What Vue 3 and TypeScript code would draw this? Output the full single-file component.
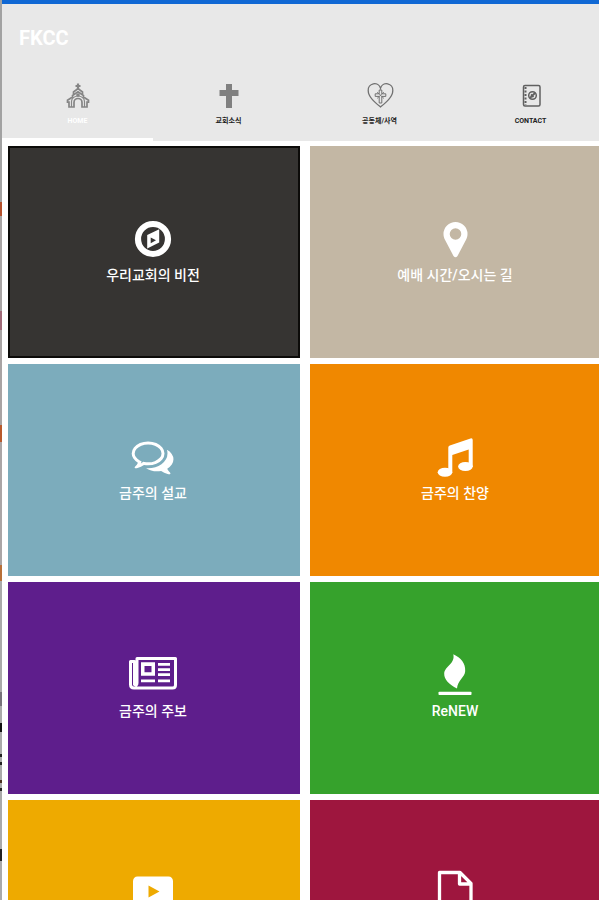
<script setup lang="ts">
import { ref } from 'vue'

type TabIcon = 'church' | 'cross' | 'heart' | 'contact'
type TileIcon = 'compass' | 'pin' | 'chat' | 'music' | 'news' | 'flame' | 'video' | 'file'

interface Tab {
  icon: TabIcon
  label: string
}

interface Tile {
  icon: TileIcon
  label: string
  tone: string
}

const tabs: Tab[] = [
  { icon: 'church', label: 'HOME' },
  { icon: 'cross', label: '교회소식' },
  { icon: 'heart', label: '공동체/사역' },
  { icon: 'contact', label: 'CONTACT' },
]

const tiles: Tile[] = [
  { icon: 'compass', label: '우리교회의 비전', tone: 'charcoal' },
  { icon: 'pin', label: '예배 시간/오시는 길', tone: 'sand' },
  { icon: 'chat', label: '금주의 설교', tone: 'teal' },
  { icon: 'music', label: '금주의 찬양', tone: 'orange' },
  { icon: 'news', label: '금주의 주보', tone: 'purple' },
  { icon: 'flame', label: 'ReNEW', tone: 'green' },
  { icon: 'video', label: '', tone: 'amber' },
  { icon: 'file', label: '', tone: 'crimson' },
]

const active = ref(0)
</script>

<template>
  <div class="viewport">
    <div class="edge" aria-hidden="true"></div>
    <div class="screen">
      <div class="status"></div>
      <header class="header">
        <h1 class="title">FKCC</h1>
        <nav class="tabs">
          <button
            v-for="(tab, i) in tabs"
            :key="tab.icon"
            type="button"
            class="tab"
            :class="{ active: i === active }"
            @click="active = i"
          >
            <svg class="tab-icon" viewBox="0 0 28 28" aria-hidden="true">
              <g v-if="tab.icon === 'church'" fill="none" stroke="#858585" stroke-width="1.7">
                <path d="M14 1.5v6M11.5 4h5" stroke-width="2.2" />
                <path d="M9.5 12V10L14 6.5l4.500 3.500V12" />
                <path d="M8.500 13.500L14 9.800l5.500 3.700v1.500l5 3.200v2h-1.500V25h-5v-4.500a4 4 0 0 0-8 0V25H5v-4.800H3.500v-2l5-3.200z" />
                <path d="M7.500 25v-5.500a6.500 5.500 0 0 1 13 0V25" stroke-width="1.200" />
                <circle cx="14" cy="13" r="1" />
              </g>
              <path v-else-if="tab.icon === 'cross'" fill="#808080" d="M11 2h6v6h6.500v6H17v12h-6V14H4.500V8H11z" />
              <g v-else-if="tab.icon === 'heart'" fill="none" stroke="#707070" stroke-width="1.300">
                <path d="M14.500 25C9 20.500 2.200 15 2.200 8.500a6.300 6.300 0 0 1 12.300-2.300A6.300 6.300 0 0 1 26.800 8.500C26.800 15 20 20.500 14.500 25z" />
                <path d="M13.200 8h2.600v3.800h4v2.600h-4V21h-2.600v-6.600h-4v-2.600h4z" stroke-width="1" />
                <path d="M11 10l7 6.500M18 10l-7 6.500" stroke-width=".8" />
              </g>
              <g v-else fill="none" stroke="#606060" stroke-width="1.500">
                <rect x="6.500" y="3.500" width="16.500" height="20.500" rx="1.500" />
                <path d="M8.500 5v18" stroke-dasharray="2 1.500" stroke-width="2" />
                <circle cx="15.500" cy="13.500" r="3.800" />
                <path d="M13 16l5-5M14 12.500l2.500 2.500" stroke-width="1.800" />
              </g>
            </svg>
            <span class="tab-label">{{ tab.label }}</span>
          </button>
        </nav>
      </header>

      <main class="grid">
        <a v-for="tile in tiles" :key="tile.icon" href="#" class="tile" :class="tile.tone">
          <svg class="tile-icon" viewBox="0 0 48 40" fill="#fff" aria-hidden="true">
            <template v-if="tile.icon === 'compass'">
              <circle cx="24" cy="20" r="15" fill="none" stroke="#fff" stroke-width="6.200" />
              <path fill-rule="evenodd" d="M18.200 16L30.200 10.300V23.500L18.200 29.500zM21.700 18.500V24.300L27 21.300z" />
            </template>
            <path
              v-else-if="tile.icon === 'pin'"
              fill-rule="evenodd"
              d="M24.500 3a12 12 0 0 1 12 12c0 2.500-.7 4.200-1.600 6L26.500 37q-2 2.500-4 0L14.100 21c-.9-1.800-1.600-3.500-1.600-6a12 12 0 0 1 12-12zm0 6.200a5.800 5.800 0 1 0 0 11.600 5.800 5.800 0 0 0 0-11.600z"
            />
            <path
              v-else-if="tile.icon === 'chat'"
              transform="translate(2.700 -1.500) scale(.0233)"
              d="M704 384q-153 0-286 52t-211.500 141-78.500 191q0 82 53 158t149 132l97 56-35 84q34-20 62-39l44-31 53 10q78 14 153 14 153 0 286-52t211.500-141 78.500-191-78.500-191-211.500-141-286-52zm0-128q191 0 353.500 68.500t256.500 186.500 94 257-94 257-256.500 186.500-353.500 68.500q-86 0-176-16-124 88-278 128-36 9-86 16h-3q-11 0-20.500-8t-11.500-21q-1-3-1-6.500t.5-6.500 2-6l2.500-5 3.500-5.500 4-5 4.500-5 4-4.500q5-6 23-25t26-29.500 22.500-29 25-38.500 20.500-44q-124-72-195-177t-71-224q0-139 94-257t256.500-186.500 353.500-68.500zm822 1169q10 24 20.500 44t25 38.500 22.500 29 26 29.500 23 25q1 1 4 4.500t4.500 5 4 5 3.500 5.500l2.500 5 2 6 .5 6.500-1 6.500q-3 14-13 22t-22 7q-50-7-86-16-154-40-278-128-90 16-176 16-271 0-472-132 58 4 88 4 161 0 309-45t264-129q125-92 192-212t67-254q0-77-23-152 129 71 204 178t75 230q0 120-71 224.500t-195 176.500z"
            />
            <template v-else-if="tile.icon === 'music'">
              <path d="M17.300 10.500q0-1.500 1.500-2L39.500 1.400q2.200-.6 2.200 1.600V30h-4V12.500L21.300 18v17.500h-4z" />
              <ellipse cx="14" cy="35.200" rx="7.300" ry="4.500" />
              <ellipse cx="34.400" cy="29.500" rx="7.300" ry="4.500" />
            </template>
            <template v-else-if="tile.icon === 'news'">
              <path
                fill="none"
                stroke="#fff"
                stroke-width="3"
                stroke-linejoin="round"
                d="M8 3.500H46.500V30q0 3-3 3H5Q1.500 33 1.500 29.500V6.500H5.500V29.500Q8 31 8 28z"
              />
              <path fill-rule="evenodd" d="M12 7.300h14v13.500H12zM15.500 11v6.300h7V11z" />
              <path d="M29 8h12v2.700H29zM29 13.200h12v2.700H29zM29 18.300h12V21H29zM12 24.500h14v2.700H12zM29 24.500h12v2.700H29z" />
            </template>
            <template v-else-if="tile.icon === 'flame'">
              <path d="M22.300-.7C30 3 34.500 8 34.200 16c-.2 6-7.700 9.500-8.200 17.500C18 29.500 13 24.500 13.200 18.500 13.500 11.500 24.500 9 22.300-.7z" />
              <rect x="7.500" y="36.700" width="33" height="3.300" rx=".8" />
            </template>
            <path
              v-else-if="tile.icon === 'video'"
              fill-rule="evenodd"
              d="M8.500 3.500h31q4 0 4.500 4.500v20q-.5 4.500-4.500 4.500h-31Q4.500 32.500 4 28V8Q4.500 3.500 8.500 3.500zM19.500 12.500V24.500L30.500 18.500z"
            />
            <path
              v-else
              fill="none"
              stroke="#fff"
              stroke-width="3.300"
              stroke-linejoin="round"
              d="M8.500-.5H29L40 10.500V38H8.500zM28.500-.5V11H40"
            />
          </svg>
          <span class="tile-label">{{ tile.label }}</span>
        </a>
      </main>
    </div>
  </div>
</template>

<style>
body {
  margin: 0;
  background: #fff;
}
</style>

<style scoped>
.viewport {
  display: flex;
  height: 100vh;
  overflow: hidden;
  font-family: Roboto, 'Noto Sans CJK KR', sans-serif;
}

.edge {
  flex: none;
  width: 2px;
  background: linear-gradient(
    #a2a2a2 0 202px,
    #b4502c 202px 216px,
    #a8a4a4 216px 311px,
    #a06a78 311px 330px,
    #a8a4a4 330px 425px,
    #b85a2c 425px 442px,
    #aaa6a6 442px 565px,
    #b87038 565px 581px,
    #aaa 581px 692px,
    #77737a 692px 706px,
    #aaa 706px 723px,
    #111 723px 732px,
    #aaa 732px 754px,
    #222 754px 757px,
    #aaa 757px 762px,
    #222 762px 765px,
    #aaa 765px 780px,
    #4a3020 780px 783px,
    #aaa 783px 788px,
    #222 788px 791px,
    #aaa 791px 849px,
    #222 849px 861px,
    #aaa 861px
  );
}

.screen {
  flex: none;
  width: calc(100% + 5px);
  background: #fff;
}

.status {
  height: 4px;
  background: #1068d4;
}

.header {
  background: #e8e8e8;
}

.title {
  margin: 0;
  padding: 0 17px;
  font-size: 20px;
  font-weight: 700;
  line-height: 68px;
  color: #fff;
}

.tabs {
  display: grid;
  grid-template-columns: repeat(4, 1fr);
}

.tab {
  display: flex;
  flex-direction: column;
  align-items: center;
  gap: 6px;
  padding: 10px 0 12px;
  border: 0;
  border-bottom: 3px solid transparent;
  background: none;
  font-family: inherit;
  color: #222;
  cursor: pointer;
}

.tab.active {
  border-bottom-color: #fff;
  color: #fff;
}

.tab-icon {
  width: 28px;
  height: 28px;
}

.tab-label {
  font-size: 7px;
  font-weight: 700;
  line-height: 10px;
}

.grid {
  display: grid;
  grid-template-columns: 1fr 1fr;
  grid-auto-rows: 212px;
  gap: 6px 10px;
  padding: 5px 4px 6px 6px;
}

.tile {
  box-sizing: border-box;
  display: flex;
  flex-direction: column;
  align-items: center;
  justify-content: center;
  gap: 6px;
  padding-right: 2px;
  color: #fff;
  text-decoration: none;
}

.tile-icon {
  width: 48px;
  height: 40px;
  overflow: visible;
}

.tile-label {
  height: 20px;
  font-size: 14px;
  font-weight: 500;
  line-height: 20px;
}

.charcoal {
  background: #363432;
  box-shadow: inset 0 0 0 2px #0c0b09;
}

.sand {
  background: #c3b7a4;
}

.teal {
  background: #7cacbc;
}

.orange {
  background: #f08800;
}

.purple {
  background: #5e1e8c;
}

.green {
  background: #36a22c;
}

.amber {
  background: #eeaa00;
}

.crimson {
  background: #9e163e;
}
</style>
